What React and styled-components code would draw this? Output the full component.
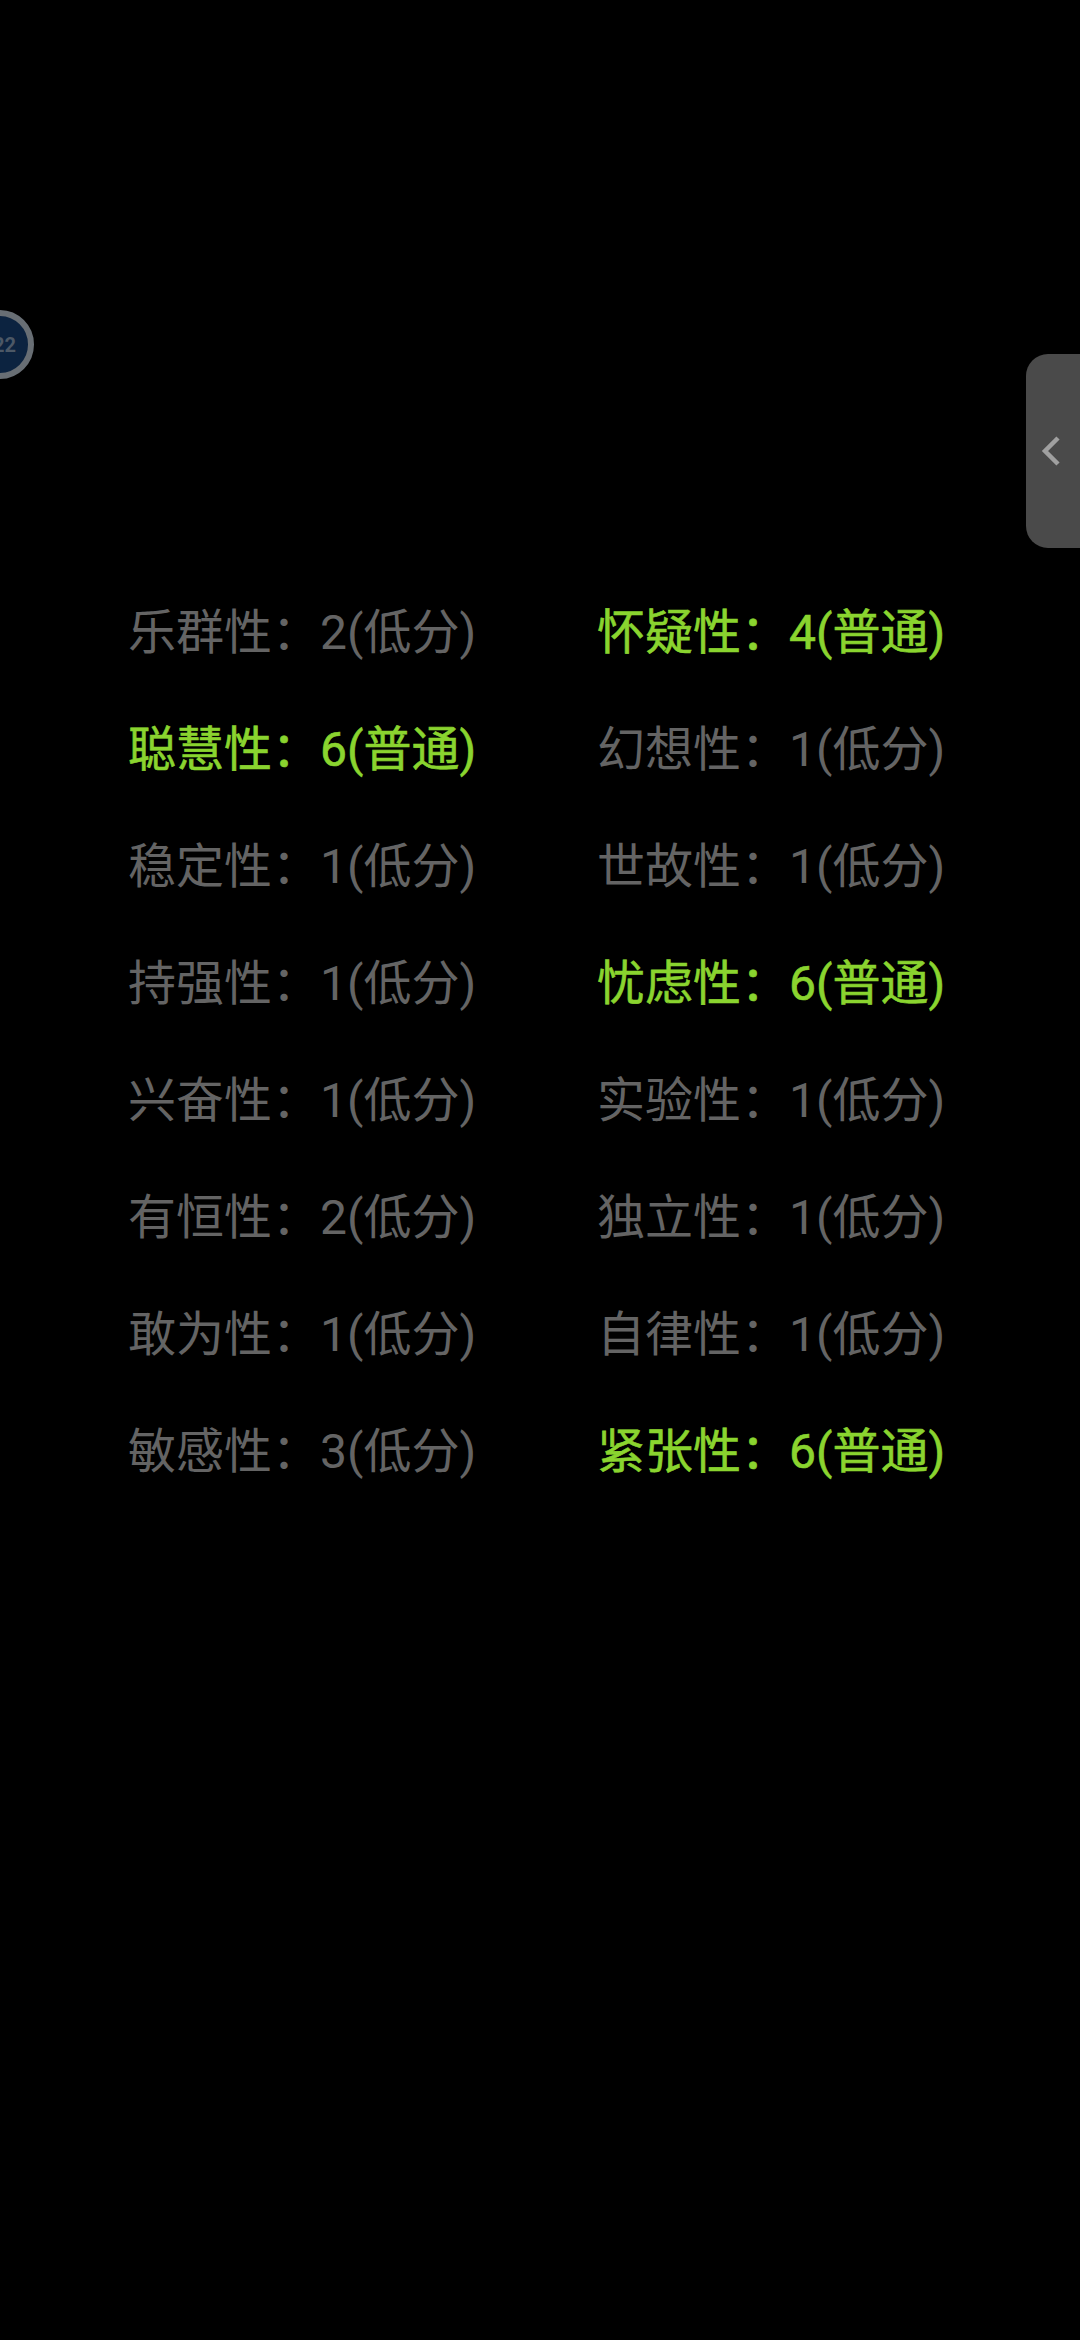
import React from 'react'
import styled, {createGlobalStyle} from 'styled-components'

const GlobalStyle = createGlobalStyle`
  html, body {
    margin: 0;
    padding: 0;
    background: #000;
  }
  body {
    font-family: 'Roboto', 'Noto Sans CJK SC', sans-serif;
  }
`

const Screen = styled.div`
  position: relative;
  width: 1080px;
  height: 2340px;
  overflow: hidden;
  background: #000;
  padding: 597px 0 0 128px;
  box-sizing: border-box;
`

const ScoreGrid = styled.div`
  display: grid;
  grid-template-columns: 469px 469px;
  grid-auto-rows: 117px;
`

const Score = styled.div`
  height: 72px;
  line-height: 72px;
  font-size: 48px;
  white-space: nowrap;
  color: ${props => (props.$high ? '#8ad42f' : '#646464')};
  -webkit-text-stroke: ${props => (props.$high ? '0.6px #8ad42f' : '0')};
`

const FloatBadge = styled.div`
  position: absolute;
  left: -35px;
  top: 310px;
  width: 69px;
  height: 69px;
  box-sizing: border-box;
  border-radius: 50%;
  border: 6px solid #686e74;
  background: #0c2340;
  display: flex;
  align-items: center;
  justify-content: flex-end;
  padding-right: 12px;
  font-size: 20px;
  font-weight: 700;
  color: #4c5866;
`

const SideHandle = styled.div`
  position: absolute;
  right: 0;
  top: 354px;
  width: 54px;
  height: 194px;
  border-radius: 22px 0 0 22px;
  background: #4a4a4a;
  display: flex;
  align-items: center;
  padding-left: 14px;
  box-sizing: border-box;
`

const Chevron = styled.svg`
  width: 22px;
  height: 32px;
  fill: none;
  stroke: #a0a0a0;
  stroke-width: 4.5;
`

const scores = [
  ['乐群性', '2(低分)', false],
  ['怀疑性', '4(普通)', true],
  ['聪慧性', '6(普通)', true],
  ['幻想性', '1(低分)', false],
  ['稳定性', '1(低分)', false],
  ['世故性', '1(低分)', false],
  ['持强性', '1(低分)', false],
  ['忧虑性', '6(普通)', true],
  ['兴奋性', '1(低分)', false],
  ['实验性', '1(低分)', false],
  ['有恒性', '2(低分)', false],
  ['独立性', '1(低分)', false],
  ['敢为性', '1(低分)', false],
  ['自律性', '1(低分)', false],
  ['敏感性', '3(低分)', false],
  ['紧张性', '6(普通)', true]
]

export default function App() {
  return (
    <Screen>
      <GlobalStyle />
      <FloatBadge>22</FloatBadge>
      <SideHandle>
        <Chevron viewBox="0 0 22 32">
          <polyline points="18,3 5,16 18,29" />
        </Chevron>
      </SideHandle>
      <ScoreGrid>
        {scores.map(([name, value, high]) => (
          <Score key={name} $high={high}>
            {name}：{value}
          </Score>
        ))}
      </ScoreGrid>
    </Screen>
  )
}
